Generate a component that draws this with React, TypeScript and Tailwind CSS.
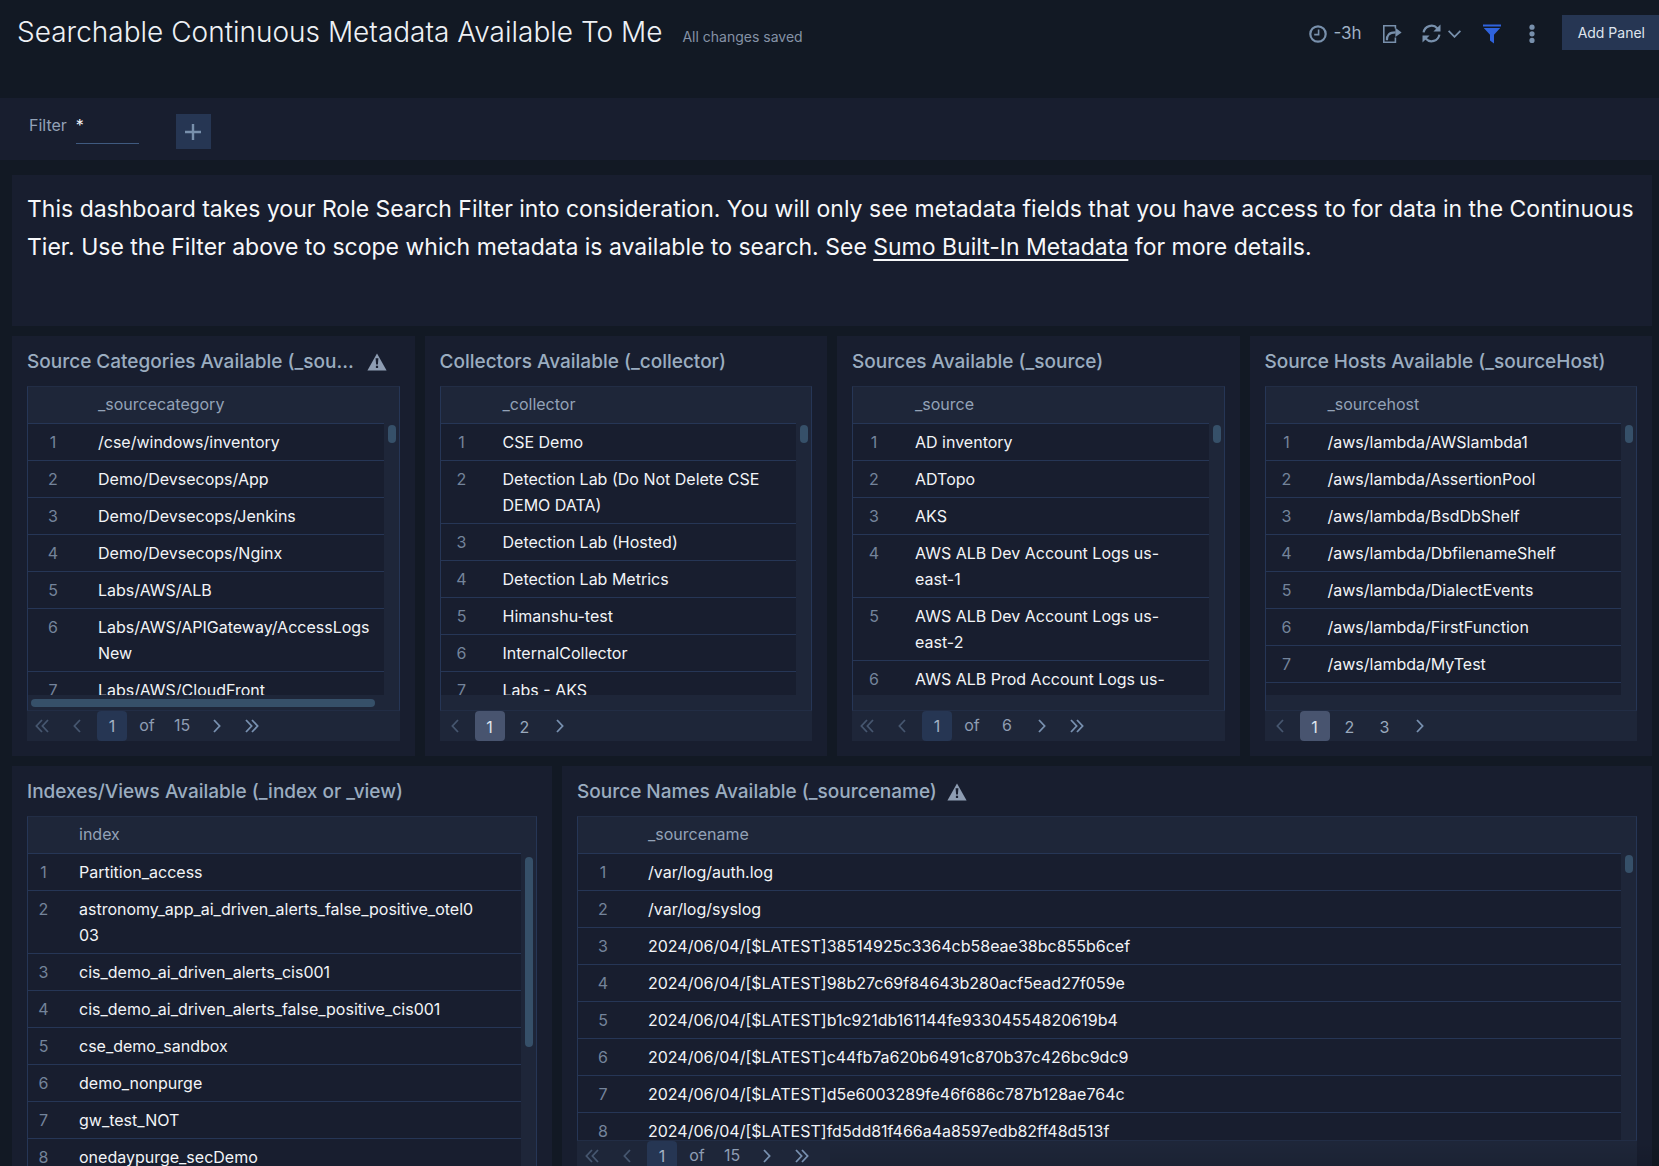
import React from "react";

type PagerProps =
  | { kind: "total"; total: number }
  | { kind: "pages"; pages: number[] };

type PanelProps = {
  title: string;
  column: string;
  rows: string[];
  indexWidth: string;
  bodyHeight: string;
  span: string;
  pager: PagerProps;
  warning?: boolean;
  track?: "empty" | "thumb";
  thumb?: string;
};

function WarningIcon() {
  return (
    <svg width="20" height="18" viewBox="0 0 20 18" role="img" aria-label="Warning" className="shrink-0">
      <path d="M10 0.5 L19.6 17.5 H0.4 Z" fill="#8e9db3" />
      <path d="M8.6 5.2 H11.4 L10.9 11.4 H9.1 Z M8.9 12.8 H11.1 V15 H8.9 Z" fill="#181e2f" />
    </svg>
  );
}

function Chevron({ dir, double = false }: { dir: "left" | "right"; double?: boolean }) {
  const w = double ? 14 : 8;
  return (
    <svg
      width={w}
      height="14"
      viewBox={`0 0 ${w} 14`}
      fill="none"
      stroke="currentColor"
      strokeWidth="1.8"
      className={dir === "left" ? "rotate-180" : ""}
    >
      <path d="M1 1 L6.6 7 L1 13" />
      {double && <path d="M7 1 L12.6 7 L7 13" />}
    </svg>
  );
}

function PageButton({ label, disabled, children }: { label: string; disabled?: boolean; children: React.ReactNode }) {
  return (
    <button
      type="button"
      aria-label={label}
      disabled={disabled}
      className={
        disabled
          ? "flex h-[30px] w-[30px] items-center justify-center text-[#46566f]"
          : "flex h-[30px] w-[30px] items-center justify-center text-[#7890b0]"
      }
    >
      {children}
    </button>
  );
}

function Pager(props: PagerProps) {
  return (
    <nav aria-label="Pages" className="flex h-[30px] items-center gap-[5px] bg-[#1e2639] text-[#8e9db3]">
      {props.kind === "total" ? (
        <>
          <PageButton label="First page" disabled>
            <Chevron dir="left" double />
          </PageButton>
          <PageButton label="Previous page" disabled>
            <Chevron dir="left" />
          </PageButton>
          <input
            aria-label="Page number"
            defaultValue="1"
            className="h-[30px] w-[30px] rounded-sm bg-[#263653] text-center text-[#a3b1c4] outline-none"
          />
          <span className="w-[30px] pb-0.5 text-center">of</span>
          <span className="w-[30px] pb-0.5 text-center">{props.total}</span>
          <PageButton label="Next page">
            <Chevron dir="right" />
          </PageButton>
          <PageButton label="Last page">
            <Chevron dir="right" double />
          </PageButton>
        </>
      ) : (
        <>
          <PageButton label="Previous page" disabled>
            <Chevron dir="left" />
          </PageButton>
          {props.pages.map((p, i) => (
            <button
              key={p}
              type="button"
              className={
                i === 0
                  ? "h-[30px] w-[30px] rounded-sm bg-[#48546f] pt-0.5 text-[#dfe5ee]"
                  : "h-[30px] w-[30px] pt-0.5 text-[#9aa9bd]"
              }
            >
              {p}
            </button>
          ))}
          <PageButton label="Next page">
            <Chevron dir="right" />
          </PageButton>
        </>
      )}
    </nav>
  );
}

function TablePanel({ title, column, rows, indexWidth, bodyHeight, span, pager, warning, track, thumb = "h-[18px]" }: PanelProps) {
  return (
    <section className={`${span} flex min-w-0 flex-col bg-[#181e2f] px-[15px] pb-[15px]`}>
      <div className="flex h-[50px] items-center gap-[10px] pt-0.5 pr-[13px]">
        <h2 className="truncate text-[19px] leading-6 font-medium text-[#9badc0]">{title}</h2>
        {warning && <WarningIcon />}
      </div>
      <div className="flex flex-col border border-[#263656] border-t-[#222d45] border-b-[#222d45] bg-[#1e2639]">
        <div className="flex">
          <div className={`${bodyHeight} min-w-0 flex-1 overflow-hidden`}>
            <table className="w-full table-fixed border-collapse text-left">
              <thead>
                <tr className="h-[36px]">
                  <th className={indexWidth} aria-label="Row"></th>
                  <th className="pb-0.5 pl-5 leading-[26px] font-normal text-[#93a2b7]">{column}</th>
                </tr>
              </thead>
              <tbody className="bg-[#181e2f]">
                {rows.map((r, i) => (
                  <tr key={i} className="border-t border-[#263656] align-top leading-[26px]">
                    <td className="py-[5px] text-center text-[#74849b]">{i + 1}</td>
                    <td className="py-[5px] pl-5 break-words whitespace-pre-line text-[#f2f4f7]">{r}</td>
                  </tr>
                ))}
              </tbody>
            </table>
          </div>
          <div className="w-[15px] shrink-0 px-1 pt-[38px]">
            <div className={`${thumb} w-2 rounded-full bg-[#365069]`} />
          </div>
        </div>
        {track && (
          <div className="h-[15px] py-1 pr-6 pl-[3px]">
            {track === "thumb" && <div className="h-2 rounded-full bg-[#365069]" />}
          </div>
        )}
      </div>
      <Pager {...pager} />
    </section>
  );
}

const categories = [
  "/cse/windows/inventory",
  "Demo/Devsecops/App",
  "Demo/Devsecops/Jenkins",
  "Demo/Devsecops/Nginx",
  "Labs/AWS/ALB",
  "Labs/AWS/APIGateway/AccessLogs\nNew",
  "Labs/AWS/CloudFront",
];
const collectors = [
  "CSE Demo",
  "Detection Lab (Do Not Delete CSE DEMO DATA)",
  "Detection Lab (Hosted)",
  "Detection Lab Metrics",
  "Himanshu-test",
  "InternalCollector",
  "Labs - AKS",
];
const sources = [
  "AD inventory",
  "ADTopo",
  "AKS",
  "AWS ALB Dev Account Logs us-\neast-1",
  "AWS ALB Dev Account Logs us-\neast-2",
  "AWS ALB Prod Account Logs us-\neast-1",
];
const hosts = [
  "/aws/lambda/AWSlambda1",
  "/aws/lambda/AssertionPool",
  "/aws/lambda/BsdDbShelf",
  "/aws/lambda/DbfilenameShelf",
  "/aws/lambda/DialectEvents",
  "/aws/lambda/FirstFunction",
  "/aws/lambda/MyTest",
  "/aws/lambda/NullPools",
];
const indexes = [
  "Partition_access",
  "astronomy_app_ai_driven_alerts_false_positive_otel0\n03",
  "cis_demo_ai_driven_alerts_cis001",
  "cis_demo_ai_driven_alerts_false_positive_cis001",
  "cse_demo_sandbox",
  "demo_nonpurge",
  "gw_test_NOT",
  "onedaypurge_secDemo",
];
const names = [
  "/var/log/auth.log",
  "/var/log/syslog",
  "2024/06/04/[$LATEST]38514925c3364cb58eae38bc855b6cef",
  "2024/06/04/[$LATEST]98b27c69f84643b280acf5ead27f059e",
  "2024/06/04/[$LATEST]b1c921db161144fe93304554820619b4",
  "2024/06/04/[$LATEST]c44fb7a620b6491c870b37c426bc9dc9",
  "2024/06/04/[$LATEST]d5e6003289fe46f686c787b128ae764c",
  "2024/06/04/[$LATEST]fd5dd81f466a4a8597edb82ff48d513f",
];

function Toolbar() {
  return (
    <div className="flex h-[37px] items-center text-[#7890ac]">
      <button type="button" className="flex items-center gap-[6px] text-[17px] text-[#9fb0c4]">
        <svg width="18" height="18" viewBox="0 0 18 18" fill="none" stroke="#7890ac">
          <circle cx="9" cy="9" r="7.7" strokeWidth="2.2" />
          <path d="M9.6 4.4 V9.6 H5.2" strokeWidth="1.6" />
        </svg>
        -3h
      </button>
      <button type="button" aria-label="Share" className="ml-5">
        <svg width="20" height="20" viewBox="0 0 20 20" fill="none" stroke="currentColor">
          <path d="M13.4 4.6 V1.8 H1.8 V18.2 H13.4 V13.6" strokeWidth="1.6" />
          <path d="M4.9 16.2 C4.7 11.2 7 8.4 13.6 8.4" strokeWidth="2.2" />
          <path d="M13.4 3.8 L19.6 8.4 L13.4 13 Z" fill="currentColor" stroke="none" />
        </svg>
      </button>
      <button type="button" aria-label="Refresh" className="ml-5 flex items-center gap-[7px]">
        <svg width="19" height="19" viewBox="0 0 19 19" fill="none" stroke="currentColor">
          <path d="M1.6 8.4 A8 8 0 0 1 15.4 4.4" strokeWidth="2.2" />
          <path d="M17.4 10.6 A8 8 0 0 1 3.6 14.6" strokeWidth="2.2" />
          <path d="M18.5 0.4 V7.6 H11.4 Z M0.5 18.6 V11.4 H7.6 Z" fill="currentColor" stroke="none" />
        </svg>
        <svg width="13" height="8" viewBox="0 0 13 8" fill="none" stroke="currentColor" strokeWidth="1.8">
          <path d="M0.6 0.8 L6.5 6.8 L12.4 0.8" />
        </svg>
      </button>
      <button type="button" aria-label="Filter" className="ml-[22px] text-[#2f63dd]">
        <svg width="18" height="20" viewBox="0 0 18 20" fill="currentColor">
          <path d="M0 0.5 H18 V2.6 H0 Z M0.8 4 H17.2 L11 10.8 V19.4 L7 16.6 V10.8 Z" />
        </svg>
      </button>
      <button type="button" aria-label="More" className="ml-7">
        <svg width="6" height="20" viewBox="0 0 6 20" fill="currentColor">
          <circle cx="3" cy="3.2" r="2.6" />
          <circle cx="3" cy="9.8" r="2.6" />
          <circle cx="3" cy="16.4" r="2.6" />
        </svg>
      </button>
      <button
        type="button"
        className="ml-[27px] h-[35px] self-start bg-[#263653] pr-[14px] pl-4 text-[14px] text-[#dfe5ee]"
      >
        Add Panel
      </button>
    </div>
  );
}

export default function App() {
  return (
    <div className="relative flex h-screen flex-col overflow-hidden bg-[#121924] font-['Inter',sans-serif] text-[16px]">
      <header className="flex h-[98px] shrink-0 items-start justify-between pt-[15px] pl-[17px]">
        <div className="flex items-baseline gap-5">
          <h1 className="text-[28px] leading-[35px] font-light text-[#eef1f5]">
            Searchable Continuous Metadata Available To Me
          </h1>
          <span className="text-[14px] text-[#8592a6]">All changes saved</span>
        </div>
        <Toolbar />
      </header>

      <div className="flex h-[62px] shrink-0 items-start bg-[#181e2f] pl-[29px]">
        <label className="flex gap-[9px] pt-[13px] leading-7 text-[#93a2b7]">
          Filter
          <input
            defaultValue="*"
            className="h-[33px] w-[63px] border-b border-[#3f5a80] pb-1 leading-7 text-[#f2f4f7] outline-none"
          />
        </label>
        <button
          type="button"
          aria-label="Add filter"
          className="mt-4 ml-[37px] flex h-[35px] w-[35px] items-center justify-center bg-[#263653]"
        >
          <svg width="16" height="16" viewBox="0 0 16 16" stroke="#7890ac" strokeWidth="2.4">
            <path d="M8 0 V16 M0 8 H16" />
          </svg>
        </button>
      </div>

      <main className="grid grid-cols-12 gap-[10px] pt-[15px] pr-[7px] pl-3">
        <section className="col-span-12 h-[151px] bg-[#181e2f] px-[15px] pt-[15px] text-[23px] leading-[38px] text-[#f7f8fa]">
          <p>
            This dashboard takes your Role Search Filter into consideration. You will only see metadata fields that you
            have access to for data in the Continuous Tier. Use the Filter above to scope which metadata is available to
            search. See{" "}
            <a href="#metadata" className="underline underline-offset-4">
              Sumo Built-In Metadata
            </a>{" "}
            for more details.
          </p>
        </section>
        <TablePanel
          span="col-span-3"
          title="Source Categories Available (_sourceCategory)"
          column="_sourcecategory"
          rows={categories}
          indexWidth="w-[50px]"
          bodyHeight="h-[308px]"
          track="thumb"
          warning
          pager={{ kind: "total", total: 15 }}
        />
        <TablePanel
          span="col-span-3"
          title="Collectors Available (_collector)"
          column="_collector"
          rows={collectors}
          indexWidth="w-[42px]"
          bodyHeight="h-[308px]"
          track="empty"
          pager={{ kind: "pages", pages: [1, 2] }}
        />
        <TablePanel
          span="col-span-3"
          title="Sources Available (_source)"
          column="_source"
          rows={sources}
          indexWidth="w-[42px]"
          bodyHeight="h-[308px]"
          track="empty"
          pager={{ kind: "total", total: 6 }}
        />
        <TablePanel
          span="col-span-3"
          title="Source Hosts Available (_sourceHost)"
          column="_sourcehost"
          rows={hosts}
          indexWidth="w-[42px]"
          bodyHeight="h-[308px]"
          track="empty"
          pager={{ kind: "pages", pages: [1, 2, 3] }}
        />
        <TablePanel
          span="col-span-4"
          title="Indexes/Views Available (_index or _view)"
          column="index"
          rows={indexes}
          indexWidth="w-[31px]"
          bodyHeight="h-[360px]"
          thumb="mt-[2px] h-[190px]"
          pager={{ kind: "pages", pages: [1, 2] }}
        />
        <TablePanel
          span="col-span-8"
          title="Source Names Available (_sourcename)"
          column="_sourcename"
          rows={names}
          indexWidth="w-[50px]"
          bodyHeight="h-[323px]"
          warning
          pager={{ kind: "total", total: 15 }}
        />
      </main>
      <div className="pointer-events-none absolute right-0 bottom-0 h-6 w-1/2 bg-linear-to-b from-transparent to-black/10" />
    </div>
  );
}
